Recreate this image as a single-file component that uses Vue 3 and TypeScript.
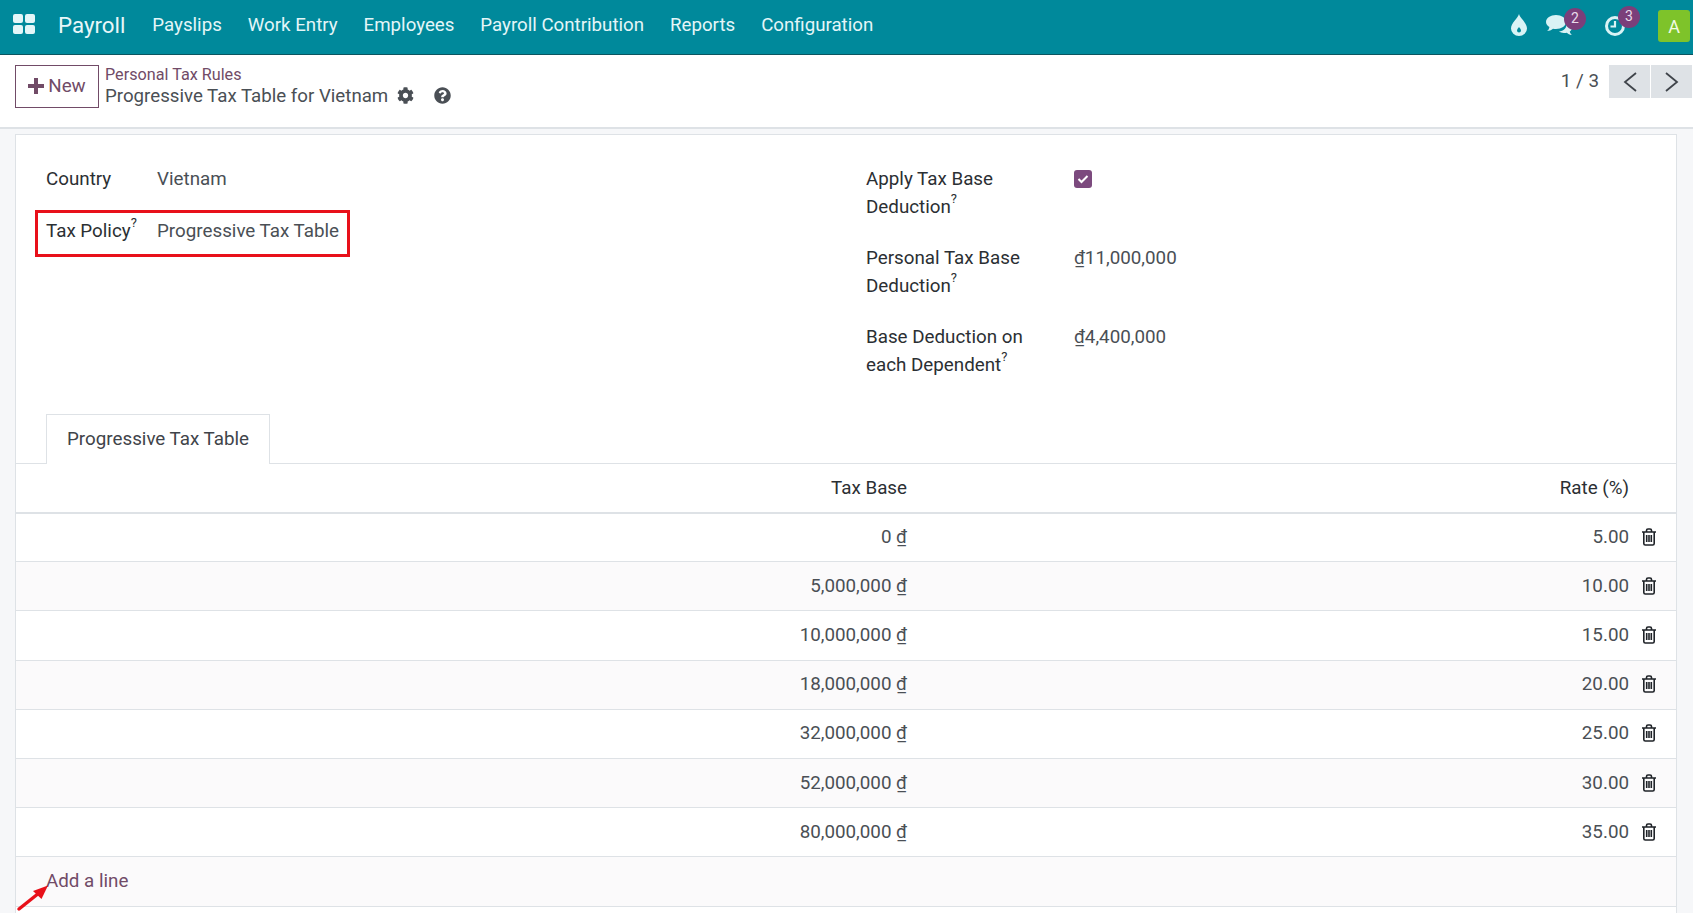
<script setup lang="ts">
interface TaxLine {
  base: string
  rate: string
}

const navItems = ['Payslips', 'Work Entry', 'Employees', 'Payroll Contribution', 'Reports', 'Configuration']

const lines: TaxLine[] = [
  { base: '0 ₫', rate: '5.00' },
  { base: '5,000,000 ₫', rate: '10.00' },
  { base: '10,000,000 ₫', rate: '15.00' },
  { base: '18,000,000 ₫', rate: '20.00' },
  { base: '32,000,000 ₫', rate: '25.00' },
  { base: '52,000,000 ₫', rate: '30.00' },
  { base: '80,000,000 ₫', rate: '35.00' },
]
</script>

<template>
  <div class="page">
    <header class="navbar">
      <svg class="apps" width="22" height="20" viewBox="0 0 22 20">
        <rect x="0" y="0" width="10" height="9" rx="2" />
        <rect x="12" y="0" width="10" height="9" rx="2" />
        <rect x="0" y="11" width="10" height="9" rx="2" />
        <rect x="12" y="11" width="10" height="9" rx="2" />
      </svg>
      <span class="brand">Payroll</span>
      <nav class="nav-items">
        <a v-for="item in navItems" :key="item">{{ item }}</a>
      </nav>
      <div class="systray">
        <svg class="tray-drop" width="16" height="22" viewBox="0 0 16 22">
          <path fill-rule="evenodd" d="M8 0c1 4 8 9 8 14.500a8 7.500 0 0 1-16 0C0 9 7 4 8 0zM8 13c-1 1.500-2 2.300-2 3.500a2 2 0 0 0 4 0c0-1.200-1-2-2-3.500z" />
        </svg>
        <div class="tray-item tray-chat">
          <svg width="26" height="22" viewBox="0 0 26 22">
            <path d="M10 1c5.500 0 10 3 10 7s-4.500 7-10 7c-1 0-2 0-3-.3C5 16 3.500 17 1 17c1.500-1 2.300-2.500 2.400-4C1.300 11.700 0 10 0 8c0-4 4.500-7 10-7z" />
            <path d="M21 8c3 .8 5 3 5 5.500 0 1.600-.8 3-2.200 4 .2 1.200.8 2.300 2 3.500-2.200-.2-3.800-1-5-2.200-1 .2-2 .3-3 .2-2-.1-3.500-.7-4.800-1.700 4.500 0 8-3 8-9.300z" />
          </svg>
          <span class="badge">2</span>
        </div>
        <div class="tray-item tray-clock">
          <svg width="24" height="24" viewBox="0 0 24 24">
            <circle cx="11" cy="13" r="8.500" fill="none" stroke="#d9f3f5" stroke-width="3" />
            <path d="M11 8v5.500H6.500" fill="none" stroke="#d9f3f5" stroke-width="2.200" />
          </svg>
          <span class="badge">3</span>
        </div>
        <div class="avatar">A</div>
      </div>
    </header>

    <div class="control-panel">
      <button class="btn-new">
        <svg width="16" height="16" viewBox="0 0 16 16"><path d="M6 0h4v6h6v4h-6v6H6v-6H0V6h6z" /></svg>
        New
      </button>
      <div class="breadcrumb">
        <a class="crumb-link">Personal Tax Rules</a>
        <div class="crumb-title">
          <span>Progressive Tax Table for Vietnam</span>
          <svg class="ctl-icon" width="17" height="17" viewBox="0 0 512 512">
            <path d="M487.4 315.7l-42.6-24.6c4.3-23.2 4.3-47 0-70.2l42.6-24.6c4.9-2.8 7.1-8.6 5.500-14-11.100-35.600-30-67.800-54.700-94.600-3.800-4.100-10-5.100-14.800-2.300L380.800 110c-17.900-15.400-38.500-27.300-60.800-35.100V25.800c0-5.600-3.900-10.500-9.400-11.700-36.700-8.200-74.300-7.800-109.200 0-5.500 1.200-9.400 6.100-9.400 11.700V75c-22.200 7.900-42.800 19.800-60.800 35.100L88.700 85.500c-4.900-2.800-11-1.900-14.800 2.300-24.700 26.700-43.600 58.900-54.700 94.600-1.700 5.400.6 11.200 5.500 14L67.300 221c-4.300 23.200-4.300 47 0 70.200l-42.600 24.600c-4.900 2.800-7.100 8.600-5.500 14 11.100 35.600 30 67.800 54.700 94.600 3.800 4.100 10 5.100 14.800 2.300l42.600-24.600c17.900 15.400 38.500 27.300 60.800 35.100v49.200c0 5.600 3.900 10.500 9.400 11.700 36.700 8.200 74.300 7.800 109.200 0 5.500-1.200 9.400-6.100 9.400-11.700v-49.200c22.200-7.900 42.800-19.800 60.800-35.100l42.600 24.600c4.900 2.800 11 1.900 14.800-2.300 24.700-26.700 43.600-58.900 54.700-94.600 1.500-5.500-.7-11.300-5.600-14.100zM256 336c-44.100 0-80-35.900-80-80s35.900-80 80-80 80 35.900 80 80-35.900 80-80 80z" />
          </svg>
          <svg class="ctl-icon help" width="17" height="17" viewBox="0 0 512 512">
            <path d="M504 256c0 136.997-111.043 248-248 248S8 392.997 8 256C8 119.083 119.043 8 256 8s248 111.083 248 248zM262.655 90c-54.497 0-89.255 22.957-116.549 63.758-3.536 5.286-2.353 12.415 2.715 16.258l34.699 26.310c5.205 3.947 12.621 3.008 16.665-2.122 17.864-22.658 30.113-35.797 57.303-35.797 20.429 0 45.698 13.148 45.698 32.958 0 14.976-12.363 22.667-32.534 33.976C247.128 238.528 216 254.941 216 296v4c0 6.627 5.373 12 12 12h56c6.627 0 12-5.373 12-12v-1.333c0-28.462 83.186-29.647 83.186-106.667 0-58.002-60.165-102-116.531-102zM256 338c-25.365 0-46 20.635-46 46 0 25.364 20.635 46 46 46s46-20.636 46-46c0-25.365-20.635-46-46-46z" />
          </svg>
        </div>
      </div>
      <div class="pager">
        <span class="pager-text">1 / 3</span>
        <button class="pager-btn">
          <svg width="16" height="22" viewBox="0 0 16 22"><path d="M14 2L3 11l11 9" /></svg>
        </button>
        <button class="pager-btn">
          <svg width="16" height="22" viewBox="0 0 16 22"><path d="M2 2l11 9-11 9" /></svg>
        </button>
      </div>
    </div>

    <main class="content">
      <div class="sheet">
        <div class="form-top">
          <div class="form-col">
            <div class="field left-field">
              <label>Country</label>
              <span class="value">Vietnam</span>
            </div>
            <div class="field left-field policy">
              <label>Tax Policy<sup>?</sup></label>
              <span class="value">Progressive Tax Table</span>
              <div class="red-box"></div>
            </div>
          </div>
          <div class="form-col right-col">
            <div class="field right-field">
              <label>Apply Tax Base<br />Deduction<sup>?</sup></label>
              <span class="checkbox">
                <svg width="12" height="10" viewBox="0 0 12 10"><path d="M1.500 5l3 3 6-6" /></svg>
              </span>
            </div>
            <div class="field right-field">
              <label>Personal Tax Base<br />Deduction<sup>?</sup></label>
              <span class="value">₫11,000,000</span>
            </div>
            <div class="field right-field">
              <label>Base Deduction on<br />each Dependent<sup>?</sup></label>
              <span class="value">₫4,400,000</span>
            </div>
          </div>
        </div>

        <div class="tabs">
          <div class="tab">Progressive Tax Table</div>
        </div>

        <div class="tax-table">
          <div class="row head">
            <div class="col-base">Tax Base</div>
            <div class="col-rate">Rate (%)</div>
            <div class="col-del"></div>
          </div>
          <div v-for="(line, i) in lines" :key="line.base" class="row line" :class="{ tinted: i % 2 === 1 }">
            <div class="col-base">{{ line.base }}</div>
            <div class="col-rate">{{ line.rate }}</div>
            <div class="col-del">
              <svg width="16" height="18" viewBox="0 0 16 18">
                <path class="trash" d="M1 4h14M5.500 4V2.500Q5.500 1 7 1h2q1.500 0 1.500 1.500V4M2.800 4v11.500Q2.800 17 4.300 17h7.400q1.500 0 1.500-1.500V4M5.700 7v7M8 7v7M10.300 7v7" />
              </svg>
            </div>
          </div>
          <div class="row line add-row tinted">
            <a class="add-link">Add a line</a>
            <svg class="arrow" width="34" height="30" viewBox="0 0 34 30">
              <path d="M3 26L23 10" stroke="#e8101a" stroke-width="3.500" stroke-linecap="round" />
              <path d="M32 2.500L17 8l8.500 8z" fill="#e8101a" />
            </svg>
          </div>
          <div class="row empty"></div>
        </div>
      </div>
    </main>
  </div>
</template>

<style scoped>
.page {
  width: 1693px;
  height: 913px;
  overflow: hidden;
  display: flex;
  flex-direction: column;
  background: #f6f7f9;
  color: #4a4f55;
  font-family: Roboto, "Liberation Sans", sans-serif;
  font-size: 18.800px;
}

.navbar {
  height: 55px;
  flex: none;
  box-sizing: border-box;
  display: flex;
  align-items: center;
  padding: 0 0 4px 13px;
  background: #00899b;
  border-bottom: 1px solid #0b5560;
  color: #e4f6f8;
}

.apps {
  fill: #e4f6f8;
  margin-bottom: 2px;
}

.brand {
  margin: 0 0 0 23px;
  font-size: 22.300px;
  color: #e8f7f9;
}

.nav-items {
  display: flex;
  gap: 26px;
  margin: 0 0 0 27px;
  font-size: 18.700px;
}

.systray {
  margin-left: auto;
  display: flex;
  align-items: center;
}

.tray-drop {
  fill: #d9f3f5;
}

.tray-item {
  position: relative;
  display: flex;
}

.tray-item svg {
  fill: #d9f3f5;
}

.tray-chat {
  margin-left: 19px;
}

.tray-clock {
  margin-left: 32px;
}

.badge {
  position: absolute;
  top: -6px;
  left: 18px;
  width: 22px;
  height: 22px;
  border-radius: 50%;
  background: #7b3f7a;
  color: #e9dcea;
  font-size: 14px;
  line-height: 20px;
  text-align: center;
}

.tray-clock .badge {
  left: 14px;
  top: -7px;
}

.avatar {
  margin: 2px 3px 0 30px;
  width: 32px;
  height: 32px;
  border-radius: 3px;
  background: #7ec32a;
  color: #f2fae4;
  font-size: 18px;
  line-height: 34px;
  text-align: center;
}

.control-panel {
  height: 74px;
  flex: none;
  box-sizing: border-box;
  display: flex;
  align-items: flex-start;
  padding: 10px 1px 0 15px;
  background: #fff;
  border-bottom: 2px solid #dee2e6;
}

.btn-new {
  width: 84px;
  height: 43px;
  border: 1px solid #714b67;
  border-radius: 0;
  background: #fff;
  color: #714b67;
  font: inherit;
  padding: 0 0 2px;
  display: flex;
  align-items: center;
  justify-content: center;
  gap: 4px;
}

.btn-new svg {
  fill: #714b67;
}

.breadcrumb {
  margin: -1px 0 0 6px;
  line-height: 22px;
}

.crumb-link {
  display: block;
  color: #714b67;
  font-size: 16.200px;
}

.crumb-title {
  display: flex;
  align-items: center;
  margin-top: -1px;
  color: #4a4f55;
  font-size: 18.700px;
}

.ctl-icon {
  fill: #4a4f55;
  margin: 0 0 2px 9px;
}

.help {
  margin-left: 20px;
}

.pager {
  margin-left: auto;
  display: flex;
  gap: 1px;
}

.pager-text {
  margin-right: 9px;
  line-height: 33px;
}

.pager-btn {
  width: 41px;
  height: 33px;
  border: 0;
  padding: 0;
  background: #dee2e6;
  display: flex;
  align-items: center;
  justify-content: center;
}

.pager-btn path {
  fill: none;
  stroke: #3f444a;
  stroke-width: 1.800;
}

.content {
  flex: 1;
  padding: 5px 16px 0 15px;
  min-height: 0;
}

.sheet {
  height: 100%;
  box-sizing: border-box;
  background: #fff;
  border: 1px solid #dee2e6;
  border-bottom: 0;
}

.form-top {
  height: 279px;
  box-sizing: border-box;
  display: flex;
  padding: 31px 0 0 30px;
}

.form-col {
  width: 820px;
  flex: none;
}

.field {
  display: flex;
  line-height: 27.500px;
}

.field label {
  color: #2b2f33;
  flex: none;
}

sup {
  font-size: 13px;
  line-height: 0;
  vertical-align: baseline;
  position: relative;
  top: -10px;
}

.left-field label {
  width: 111px;
}

.policy {
  position: relative;
  margin-top: 24px;
}

.red-box {
  position: absolute;
  left: -11px;
  top: -8px;
  width: 315px;
  height: 47px;
  box-sizing: border-box;
  border: 3px solid #e8101a;
}

.right-col {
  display: flex;
  flex-direction: column;
  gap: 24px;
}

.right-field label {
  width: 208px;
}

.checkbox {
  width: 18px;
  height: 18px;
  margin-top: 4px;
  border-radius: 3px;
  background: #7c4a7e;
  display: flex;
  align-items: center;
  justify-content: center;
}

.checkbox path {
  fill: none;
  stroke: #fff;
  stroke-width: 2;
}

.tabs {
  display: flex;
  padding-left: 30px;
  height: 50px;
  box-sizing: border-box;
  border-bottom: 1px solid #dee2e6;
}

.tab {
  box-sizing: border-box;
  height: 50px;
  padding: 13px 20px 0;
  background: #fff;
  border: 1px solid #dee2e6;
  border-bottom: 0;
  color: #3f444a;
}

.row {
  height: 49.200px;
  box-sizing: border-box;
  display: flex;
  align-items: center;
  border-bottom: 1px solid #dee2e6;
}

.line {
  padding-bottom: 1px;
}

.head {
  height: 50px;
  padding-bottom: 1px;
  margin-bottom: -1px;
  border-bottom-width: 2px;
  color: #2b2f33;
}

.tinted {
  background: #fbfafb;
}

.col-base {
  width: 891px;
  text-align: right;
}

.col-rate {
  width: 722px;
  text-align: right;
}

.col-del {
  width: 35px;
  padding-left: 12px;
  box-sizing: border-box;
  display: flex;
}

.trash {
  fill: none;
  stroke: #1f2328;
  stroke-width: 1.600;
}

.add-row {
  position: relative;
  padding-left: 30px;
}

.add-link {
  color: #714b67;
}

.arrow {
  position: absolute;
  left: 0;
  top: 26px;
}

.empty {
  border-bottom: 0;
}
</style>

<style>
html,
body {
  margin: 0;
}
</style>
